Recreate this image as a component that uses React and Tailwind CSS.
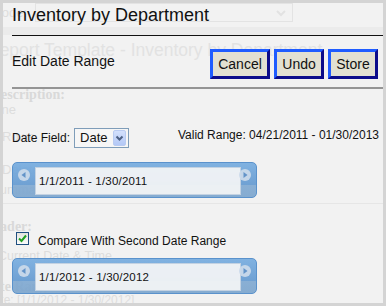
import React from "react";

function RangeBar({ label }) {
  return (
    <div className="relative ml-[9px] h-[36px] w-[245px] rounded-[5px] border border-[#5a92cc] bg-[linear-gradient(180deg,#74abdfe6_0%,#6198d0e6_64%,#7ea8d1e6_65%,#7aa4cde6_100%)] pl-[22px] pt-[4px]">
      <div className="flex h-[28px] w-[206px] items-center border border-[#c3d2e2] bg-[#f3f4f5ee] pl-[3px] text-[11.5px] leading-[14px] tracking-[0.2px] text-[#111]">
        {label}
      </div>
      <span className="absolute left-[5px] top-[6px] flex h-[12px] w-[12px] items-center justify-center rounded-full bg-[#cbdaeaee]">
        <svg width="12" height="12" viewBox="0 0 12 12">
          <polygon points="7.5,3 3.5,6 7.5,9" fill="#6393c8" />
        </svg>
      </span>
      <span className="absolute left-[226px] top-[6px] flex h-[12px] w-[12px] items-center justify-center rounded-full bg-[#cbdaeaee]">
        <svg width="12" height="12" viewBox="0 0 12 12">
          <polygon points="4.5,3 8.5,6 4.5,9" fill="#6393c8" />
        </svg>
      </span>
    </div>
  );
}

function FadedPage() {
  // the report page behind the dialog, seen through it
  return (
    <div className="flex flex-col text-[#dddddd]">
      <div className="flex h-[24px] items-start">
        <span className="-ml-[12px] mt-[3px] w-[44px] text-[13px] leading-[14px]">Mode:</span>
        <div className="flex h-[19px] w-[258px] items-center justify-end border border-[#e3e3e3] pr-[5px]">
          <svg width="12" height="10" viewBox="0 0 12 10">
            <path d="M2 3 L6 7 L10 3" fill="none" stroke="#e2e2e2" strokeWidth="2" />
          </svg>
        </div>
      </div>
      <div className="h-[8px] bg-[#ebebeb]" />
      <div className="-ml-[16px] mt-[4px] whitespace-nowrap text-[17.5px] leading-[22px] text-[#e2e2e2]">
        Report Template - Inventory by Department
      </div>
      <div className="-ml-[12px] mt-[27px] font-['Liberation_Serif',serif] text-[14px] font-bold leading-[14px] text-[#d9d9d9]">
        Description:
      </div>
      <div className="-ml-[18px] mt-[1px] text-[13px] leading-[14px]">None</div>
      <div className="-ml-[1px] mt-[13px] text-[13px] leading-[14px]">Rows</div>
      <div className="-ml-[1px] mt-[19px] text-[13px] leading-[14px]">Delete</div>
      <div className="-ml-[12px] mt-[6px] text-[13px] leading-[14px]">Summary</div>
      <div className="mt-[6px] h-px bg-[#e6e6e6]" />
      <div className="-ml-[20px] mt-[16px] font-['Liberation_Serif',serif] text-[14px] font-bold leading-[14px] text-[#d9d9d9]">
        Header:
      </div>
      <div className="-ml-[5px] mt-[15px] whitespace-nowrap text-[12.5px] leading-[14px]">Current Date &amp; Time</div>
      <div className="-ml-[20px] mt-[17px] font-['Liberation_Serif',serif] text-[14px] font-bold leading-[13px] text-[#d9d9d9]">
        Date Range:
      </div>
      <div className="-ml-[18px] whitespace-nowrap text-[12px] leading-[14px]">Date: [1/1/2012 - 1/30/2012]</div>
    </div>
  );
}

export default function App() {
  const buttons = [
    ["Cancel", "w-[60px]"],
    ["Undo", "w-[50px]"],
    ["Store", "w-[50px]"],
  ];

  return (
    <div className="h-[306px] w-[386px] bg-[#d4d4d4] p-[3px] font-['Liberation_Sans',Arial,sans-serif]">
      <div className="relative h-full overflow-hidden bg-[#f2f2f2]">
        <FadedPage />

        {/* Dialog */}
        <div className="absolute inset-0 flex flex-col">
          <h1 className="mt-[2px] pl-[9px] text-[18px] leading-[21px] text-[#111]">Inventory by Department</h1>
          <div className="ml-[9px] mt-[9px] h-px bg-[#111]" />

          <div className="flex items-start pl-[9px] pr-[5px] pt-[13px]">
            <span className="mt-[4px] text-[14px] leading-[16px] text-[#111]">Edit Date Range</span>
            <div className="ml-auto flex gap-[4px]">
              {buttons.map(([label, w]) => (
                <button
                  key={label}
                  className={`${w} h-[30px] border-[3px] border-b-[#0c0c8a] border-l-[#1f5cff] border-r-[#0c0c8a] border-t-[#1f5cff] bg-[#e2e0d2] text-[14px] leading-[16px] text-[#111]`}
                >
                  {label}
                </button>
              ))}
            </div>
          </div>

          <div className="ml-[9px] mt-[8px] h-[2px] bg-[#959595]" />

          {/* Date field */}
          <div className="mt-[39px] flex items-start pl-[9px] pr-[4px]">
            <div className="flex items-center gap-[4px]">
              <span className="text-[12px] leading-[14px] text-[#111]">Date Field:</span>
              <div className="flex h-[20px] w-[55px] items-center border border-[#7f9db9] bg-[#f6f6f6] pl-[5px] pr-[2px]">
                <span className="text-[13px] leading-[14px] text-[#111]">Date</span>
                <span className="ml-auto flex h-[16px] w-[13px] items-center justify-center rounded-[2px] border border-[#b9cbf1] bg-[linear-gradient(180deg,#d3e0fc,#b3c8f6)]">
                  <svg width="9" height="7" viewBox="0 0 9 7">
                    <path d="M1.5 1.5 L4.5 4.5 L7.5 1.5" fill="none" stroke="#4d6185" strokeWidth="2" />
                  </svg>
                </span>
              </div>
            </div>
            <span className="ml-auto text-[12px] leading-[14px] text-[#111]">Valid Range: 04/21/2011 - 01/30/2013</span>
          </div>

          <div className="mt-[14px]">
            <RangeBar label="1/1/2011 - 1/30/2011" />
          </div>

          {/* Compare */}
          <div className="mt-[34px] flex items-start gap-[9px] pl-[13px]">
            <span className="h-[13px] w-[13px] border border-[#1f4f80] bg-[linear-gradient(180deg,#e4e4de,#fbfbfb)]">
              <svg width="11" height="11" viewBox="0 0 11 11">
                <path d="M2 5.5 L4.5 8 L9 2.5" fill="none" stroke="#21a121" strokeWidth="2" />
              </svg>
            </span>
            <span className="mt-[2px] text-[12px] leading-[14px] text-[#111]">Compare With Second Date Range</span>
          </div>

          <div className="mt-[10px]">
            <RangeBar label="1/1/2012 - 1/30/2012" />
          </div>
        </div>
      </div>
    </div>
  );
}
